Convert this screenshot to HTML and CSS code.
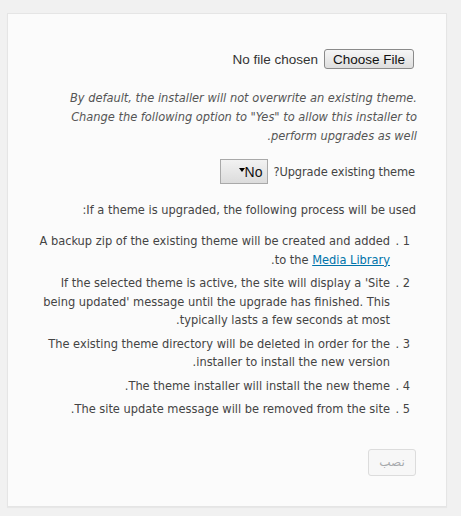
FILE: index.html
```html
<!DOCTYPE html>
<html dir="rtl" lang="fa">
<head>
<meta charset="utf-8">
<title>Install theme</title>
<link rel="stylesheet" href="styles.css">
</head>
<body>
<div class="panel">
  <div class="file-row">
    <button class="file-btn" type="button">Choose File</button>
    <span class="file-label">No file chosen</span>
  </div>
  <p class="desc">By default, the installer will not overwrite an existing theme. Change the following option to "Yes" to allow this installer to perform upgrades as well.</p>
  <div class="upgrade-row">
    <span class="upgrade-label">Upgrade existing theme?</span>
    <div class="select"><span class="select-value">No</span><span class="select-arrow"></span></div>
  </div>
  <p class="intro">If a theme is upgraded, the following process will be used:</p>
  <ol class="steps">
    <li class="step"><span class="num">. 1</span><span class="step-text">A backup zip of the existing theme will be created and added to the <a href="#" class="link">Media Library</a>.</span></li>
    <li class="step"><span class="num">. 2</span><span class="step-text">If the selected theme is active, the site will display a 'Site being updated' message until the upgrade has finished. This typically lasts a few seconds at most.</span></li>
    <li class="step"><span class="num">. 3</span><span class="step-text">The existing theme directory will be deleted in order for the installer to install the new version.</span></li>
    <li class="step"><span class="num">. 4</span><span class="step-text">The theme installer will install the new theme.</span></li>
    <li class="step"><span class="num">. 5</span><span class="step-text">The site update message will be removed from the site.</span></li>
  </ol>
  <div class="actions">
    <button class="install-btn" type="button" disabled>نصب</button>
  </div>
</div>
</body>
</html>
```

FILE: styles.css
```css
html, body {
  margin: 0;
  padding: 0;
}
body {
  background: #f1f1f1;
  padding: 13px 14px 9px 7px;
  font-family: "DejaVu Sans Condensed", "DejaVu Sans", sans-serif;
  font-size: 12.7px;
  color: #444;
}
.panel {
  background: #fbfbfb;
  border: 1px solid #e5e5e5;
  box-shadow: 0 1px 1px rgba(0,0,0,0.04);
  height: 494px;
  box-sizing: border-box;
  padding: 35px 29px 0 0;
}
.file-row {
  display: flex;
  align-items: center;
  gap: 6px;
  height: 20px;
  padding-right: 3px;
}
.file-btn {
  font-family: "Liberation Sans", Arial, sans-serif;
  font-size: 13.5px;
  color: #111;
  height: 20px;
  width: 90px;
  padding: 0;
  border: 1px solid #8a8a8a;
  border-radius: 3px;
  background: linear-gradient(#f6f6f6, #dedede);
}
.file-label {
  font-family: "Liberation Sans", Arial, sans-serif;
  font-size: 13.5px;
  color: #333;
}
.desc {
  margin: 19px 0 0 0;
  width: 352px;
  font-style: italic;
  line-height: 19px;
  color: #555;
}
.upgrade-row {
  display: flex;
  align-items: center;
  gap: 5px;
  margin-top: 14px;
  padding-right: 2px;
}
.select {
  width: 48px;
  height: 25px;
  box-sizing: border-box;
  border: 1px solid #a9a9a9;
  background: linear-gradient(#f2f2f2, #dcdcdc);
  display: flex;
  align-items: center;
  padding-right: 5px;
}
.select-value {
  font-family: "Liberation Sans", Arial, sans-serif;
  font-size: 14px;
  color: #111;
}
.select-arrow {
  width: 0;
  height: 0;
  border-left: 3px solid transparent;
  border-right: 3px solid transparent;
  border-top: 4px solid #000;
  margin-bottom: 3px;
}
.upgrade-label {
  color: #444;
  letter-spacing: -0.1px;
}
.intro {
  margin: 18px 0 0 0;
  padding-right: 1px;
}
.steps {
  list-style: none;
  margin: 15px 0 0 0;
  padding: 0 7px 0 0;
  display: flex;
  flex-direction: column;
  gap: 5px;
}
.step {
  display: flex;
  line-height: 18.5px;
}
.num {
  direction: ltr;
  unicode-bidi: isolate;
  width: 20px;
  flex: none;
  text-align: right;
}
.step-text {
  width: 352px;
}
.link {
  color: #0073aa;
  text-decoration: underline;
}
.actions {
  display: flex;
  margin-top: 30px;
  padding-right: 1px;
}
.install-btn {
  width: 48px;
  height: 27px;
  font-family: "DejaVu Sans", sans-serif;
  font-size: 12px;
  color: #a7aaad;
  background: #f7f7f7;
  border: 1px solid #dcdcdc;
  border-radius: 3px;
  padding: 0;
}
```
